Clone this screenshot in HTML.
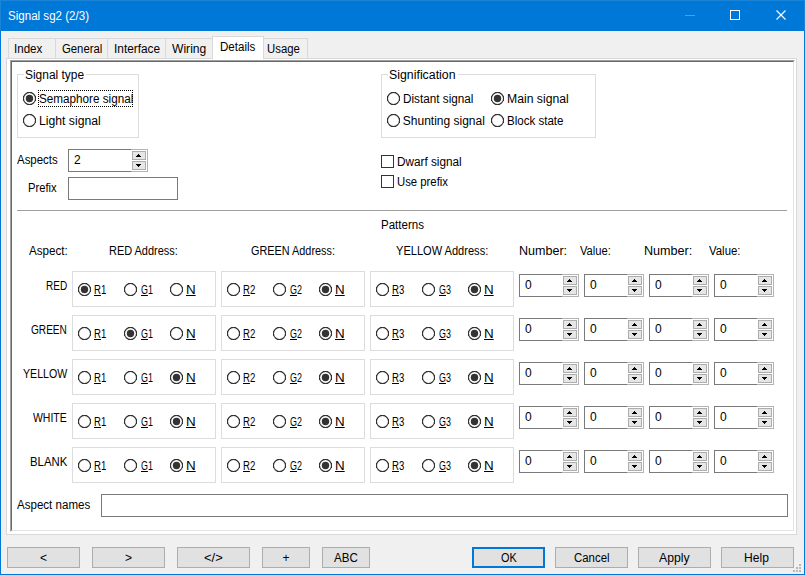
<!DOCTYPE html>
<html><head><meta charset="utf-8"><style>
html,body{margin:0;padding:0}
body{width:805px;height:575px;overflow:hidden;position:relative;background:#F0F0F0;font-family:"Liberation Sans", sans-serif;font-size:12px;line-height:14px;white-space:pre}
div{white-space:pre}
</style></head><body>
<div style="position:absolute;left:0px;top:0px;width:805px;height:31px;background:#0078D7"></div>
<div style="position:absolute;left:0px;top:0px;width:805px;height:1px;background:#1A84D8"></div>
<div style="position:absolute;left:0px;top:0px;width:1px;height:31px;background:#1A84D8"></div>
<div style="position:absolute;left:804px;top:0px;width:1px;height:31px;background:#1A84D8"></div>
<div style="position:absolute;left:0px;top:31px;width:1px;height:544px;background:#0078D7"></div>
<div style="position:absolute;left:804px;top:31px;width:1px;height:544px;background:#0078D7"></div>
<div style="position:absolute;left:0px;top:574px;width:805px;height:1px;background:#0078D7"></div>
<div style="position:absolute;left:1px;top:31px;width:803px;height:1px;background:#F0F0F0"></div>
<div style="position:absolute;left:1px;top:31px;width:1px;height:543px;background:#F0F0F0"></div>
<div style="position:absolute;left:803px;top:31px;width:1px;height:543px;background:#F0F0F0"></div>
<div style="position:absolute;left:1px;top:573px;width:803px;height:1px;background:#F0F0F0"></div>
<div style="position:absolute;left:685px;top:15px;width:10px;height:1px;background:#4D9FE3"></div>
<div style="position:absolute;left:730px;top:10px;width:10px;height:10px;box-sizing:border-box;border:1px solid #fff"></div>
<svg style="position:absolute;left:775px;top:9px" width="12" height="12" viewBox="0 0 12 12"><path d="M1.5 1.5 L10.5 10.5 M10.5 1.5 L1.5 10.5" stroke="#fff" stroke-width="1.1" fill="none"/></svg>
<div style="position:absolute;left:6px;top:58px;width:791px;height:477px;box-sizing:border-box;border:1px solid #D9D9D9;background:#fff"></div>
<div style="position:absolute;left:8px;top:38px;width:48px;height:21px;box-sizing:border-box;border:1px solid #D9D9D9;background:#F0F0F0"></div>
<div style="position:absolute;left:55px;top:38px;width:53px;height:21px;box-sizing:border-box;border:1px solid #D9D9D9;background:#F0F0F0"></div>
<div style="position:absolute;left:107px;top:38px;width:59px;height:21px;box-sizing:border-box;border:1px solid #D9D9D9;background:#F0F0F0"></div>
<div style="position:absolute;left:165px;top:38px;width:48px;height:21px;box-sizing:border-box;border:1px solid #D9D9D9;background:#F0F0F0"></div>
<div style="position:absolute;left:263px;top:38px;width:45px;height:21px;box-sizing:border-box;border:1px solid #D9D9D9;background:#F0F0F0"></div>
<div style="position:absolute;left:212px;top:36px;width:52px;height:23px;box-sizing:border-box;border:1px solid #D9D9D9;border-bottom:none;background:#fff"></div>
<div style="position:absolute;left:10px;top:60px;width:785px;height:472px;box-sizing:border-box;border:1px solid;border-color:#A0A0A0 #FFFFFF #FFFFFF #A0A0A0;background:#fff"></div>
<div style="position:absolute;left:11px;top:61px;width:783px;height:470px;box-sizing:border-box;border:1px solid;border-color:#696969 #E3E3E3 #E3E3E3 #696969;background:#fff"></div>
<div style="position:absolute;left:17px;top:74px;width:122px;height:64px;box-sizing:border-box;border:1px solid #DCDCDC"></div>
<div style="position:absolute;left:24px;top:68px;width:62px;height:12px;background:#fff"></div>
<svg style="position:absolute;left:23px;top:92px" width="13" height="13"><circle cx="6.5" cy="6.5" r="6" fill="#fff" stroke="#333" stroke-width="1.1"/><path d="M4 0h5v1h-5zM0 4h1v1h-1zM0 5h1v1h-1zM0 6h1v1h-1zM0 7h1v1h-1zM0 8h1v1h-1zM12 4h1v1h-1zM12 5h1v1h-1zM12 6h1v1h-1zM12 7h1v1h-1zM12 8h1v1h-1zM4 12h5v1h-5z" fill="#333" shape-rendering="crispEdges"/><circle cx="6.5" cy="6.5" r="3.7" fill="#333" opacity="1"/><path d="M5 3h3v1h-3zM3 5h7v1h-7zM3 6h7v1h-7zM3 7h7v1h-7zM5 9h3v1h-3zM4 4h5v1h-5zM4 8h5v1h-5z" fill="#333"/></svg>
<svg style="position:absolute;left:23px;top:114px" width="13" height="13"><circle cx="6.5" cy="6.5" r="6" fill="#fff" stroke="#333" stroke-width="1.1"/><path d="M4 0h5v1h-5zM0 4h1v1h-1zM0 5h1v1h-1zM0 6h1v1h-1zM0 7h1v1h-1zM0 8h1v1h-1zM12 4h1v1h-1zM12 5h1v1h-1zM12 6h1v1h-1zM12 7h1v1h-1zM12 8h1v1h-1zM4 12h5v1h-5z" fill="#333" shape-rendering="crispEdges"/><circle cx="6.5" cy="6.5" r="3.7" fill="#333" opacity="0"/></svg>
<div style="position:absolute;left:38px;top:90px;width:95px;height:1px;background:repeating-linear-gradient(to right,#000 0 1px,transparent 1px 2px)"></div>
<div style="position:absolute;left:38px;top:106px;width:95px;height:1px;background:repeating-linear-gradient(to right,#000 0 1px,transparent 1px 2px)"></div>
<div style="position:absolute;left:38px;top:90px;width:1px;height:17px;background:repeating-linear-gradient(to bottom,#000 0 1px,transparent 1px 2px)"></div>
<div style="position:absolute;left:132px;top:90px;width:1px;height:17px;background:repeating-linear-gradient(to bottom,#000 0 1px,transparent 1px 2px)"></div>
<div style="position:absolute;left:381px;top:74px;width:215px;height:64px;box-sizing:border-box;border:1px solid #DCDCDC"></div>
<div style="position:absolute;left:388px;top:68px;width:70px;height:12px;background:#fff"></div>
<svg style="position:absolute;left:387px;top:92px" width="13" height="13"><circle cx="6.5" cy="6.5" r="6" fill="#fff" stroke="#333" stroke-width="1.1"/><path d="M4 0h5v1h-5zM0 4h1v1h-1zM0 5h1v1h-1zM0 6h1v1h-1zM0 7h1v1h-1zM0 8h1v1h-1zM12 4h1v1h-1zM12 5h1v1h-1zM12 6h1v1h-1zM12 7h1v1h-1zM12 8h1v1h-1zM4 12h5v1h-5z" fill="#333" shape-rendering="crispEdges"/><circle cx="6.5" cy="6.5" r="3.7" fill="#333" opacity="0"/></svg>
<svg style="position:absolute;left:387px;top:114px" width="13" height="13"><circle cx="6.5" cy="6.5" r="6" fill="#fff" stroke="#333" stroke-width="1.1"/><path d="M4 0h5v1h-5zM0 4h1v1h-1zM0 5h1v1h-1zM0 6h1v1h-1zM0 7h1v1h-1zM0 8h1v1h-1zM12 4h1v1h-1zM12 5h1v1h-1zM12 6h1v1h-1zM12 7h1v1h-1zM12 8h1v1h-1zM4 12h5v1h-5z" fill="#333" shape-rendering="crispEdges"/><circle cx="6.5" cy="6.5" r="3.7" fill="#333" opacity="0"/></svg>
<svg style="position:absolute;left:491px;top:92px" width="13" height="13"><circle cx="6.5" cy="6.5" r="6" fill="#fff" stroke="#333" stroke-width="1.1"/><path d="M4 0h5v1h-5zM0 4h1v1h-1zM0 5h1v1h-1zM0 6h1v1h-1zM0 7h1v1h-1zM0 8h1v1h-1zM12 4h1v1h-1zM12 5h1v1h-1zM12 6h1v1h-1zM12 7h1v1h-1zM12 8h1v1h-1zM4 12h5v1h-5z" fill="#333" shape-rendering="crispEdges"/><circle cx="6.5" cy="6.5" r="3.7" fill="#333" opacity="1"/><path d="M5 3h3v1h-3zM3 5h7v1h-7zM3 6h7v1h-7zM3 7h7v1h-7zM5 9h3v1h-3zM4 4h5v1h-5zM4 8h5v1h-5z" fill="#333"/></svg>
<svg style="position:absolute;left:491px;top:114px" width="13" height="13"><circle cx="6.5" cy="6.5" r="6" fill="#fff" stroke="#333" stroke-width="1.1"/><path d="M4 0h5v1h-5zM0 4h1v1h-1zM0 5h1v1h-1zM0 6h1v1h-1zM0 7h1v1h-1zM0 8h1v1h-1zM12 4h1v1h-1zM12 5h1v1h-1zM12 6h1v1h-1zM12 7h1v1h-1zM12 8h1v1h-1zM4 12h5v1h-5z" fill="#333" shape-rendering="crispEdges"/><circle cx="6.5" cy="6.5" r="3.7" fill="#333" opacity="0"/></svg>
<div style="position:absolute;left:68px;top:149px;width:80px;height:23px;box-sizing:border-box;border:1px solid #7A7A7A;background:#fff"></div>
<div style="position:absolute;left:131px;top:149px;width:17px;height:23px;box-sizing:border-box;border:1px solid #B4B4B4;border-left:none;background:#fff"></div>
<div style="position:absolute;left:132px;top:151px;width:14px;height:9px;box-sizing:border-box;border:1px solid #ADADAD;background:#E6E6E6"></div>
<div style="position:absolute;left:132px;top:161px;width:14px;height:9px;box-sizing:border-box;border:1px solid #ADADAD;background:#E6E6E6"></div>
<svg style="position:absolute;left:132px;top:151px" width="14" height="19" shape-rendering="crispEdges"><rect x="6" y="3" width="1" height="1"/><rect x="5" y="4" width="3" height="1"/><rect x="4" y="5" width="5" height="1"/><rect x="4" y="13" width="5" height="1"/><rect x="5" y="14" width="3" height="1"/><rect x="6" y="15" width="1" height="1"/></svg>
<div style="position:absolute;left:68px;top:177px;width:110px;height:23px;box-sizing:border-box;border:1px solid #7A7A7A;background:#fff"></div>
<div style="position:absolute;left:381px;top:155px;width:13px;height:13px;box-sizing:border-box;border:1px solid #333;background:#fff"></div>
<div style="position:absolute;left:381px;top:175px;width:13px;height:13px;box-sizing:border-box;border:1px solid #333;background:#fff"></div>
<div style="position:absolute;left:17px;top:210px;width:770px;height:1px;background:#A0A0A0"></div>
<div style="position:absolute;left:72px;top:271px;width:144px;height:36px;box-sizing:border-box;border:1px solid #DCDCDC"></div>
<svg style="position:absolute;left:78px;top:283px" width="13" height="13"><circle cx="6.5" cy="6.5" r="6" fill="#fff" stroke="#333" stroke-width="1.1"/><path d="M4 0h5v1h-5zM0 4h1v1h-1zM0 5h1v1h-1zM0 6h1v1h-1zM0 7h1v1h-1zM0 8h1v1h-1zM12 4h1v1h-1zM12 5h1v1h-1zM12 6h1v1h-1zM12 7h1v1h-1zM12 8h1v1h-1zM4 12h5v1h-5z" fill="#333" shape-rendering="crispEdges"/><circle cx="6.5" cy="6.5" r="3.7" fill="#333" opacity="1"/><path d="M5 3h3v1h-3zM3 5h7v1h-7zM3 6h7v1h-7zM3 7h7v1h-7zM5 9h3v1h-3zM4 4h5v1h-5zM4 8h5v1h-5z" fill="#333"/></svg>
<svg style="position:absolute;left:124px;top:283px" width="13" height="13"><circle cx="6.5" cy="6.5" r="6" fill="#fff" stroke="#333" stroke-width="1.1"/><path d="M4 0h5v1h-5zM0 4h1v1h-1zM0 5h1v1h-1zM0 6h1v1h-1zM0 7h1v1h-1zM0 8h1v1h-1zM12 4h1v1h-1zM12 5h1v1h-1zM12 6h1v1h-1zM12 7h1v1h-1zM12 8h1v1h-1zM4 12h5v1h-5z" fill="#333" shape-rendering="crispEdges"/><circle cx="6.5" cy="6.5" r="3.7" fill="#333" opacity="0"/></svg>
<svg style="position:absolute;left:170px;top:283px" width="13" height="13"><circle cx="6.5" cy="6.5" r="6" fill="#fff" stroke="#333" stroke-width="1.1"/><path d="M4 0h5v1h-5zM0 4h1v1h-1zM0 5h1v1h-1zM0 6h1v1h-1zM0 7h1v1h-1zM0 8h1v1h-1zM12 4h1v1h-1zM12 5h1v1h-1zM12 6h1v1h-1zM12 7h1v1h-1zM12 8h1v1h-1zM4 12h5v1h-5z" fill="#333" shape-rendering="crispEdges"/><circle cx="6.5" cy="6.5" r="3.7" fill="#333" opacity="0"/></svg>
<div style="position:absolute;left:221px;top:271px;width:144px;height:36px;box-sizing:border-box;border:1px solid #DCDCDC"></div>
<svg style="position:absolute;left:227px;top:283px" width="13" height="13"><circle cx="6.5" cy="6.5" r="6" fill="#fff" stroke="#333" stroke-width="1.1"/><path d="M4 0h5v1h-5zM0 4h1v1h-1zM0 5h1v1h-1zM0 6h1v1h-1zM0 7h1v1h-1zM0 8h1v1h-1zM12 4h1v1h-1zM12 5h1v1h-1zM12 6h1v1h-1zM12 7h1v1h-1zM12 8h1v1h-1zM4 12h5v1h-5z" fill="#333" shape-rendering="crispEdges"/><circle cx="6.5" cy="6.5" r="3.7" fill="#333" opacity="0"/></svg>
<svg style="position:absolute;left:273px;top:283px" width="13" height="13"><circle cx="6.5" cy="6.5" r="6" fill="#fff" stroke="#333" stroke-width="1.1"/><path d="M4 0h5v1h-5zM0 4h1v1h-1zM0 5h1v1h-1zM0 6h1v1h-1zM0 7h1v1h-1zM0 8h1v1h-1zM12 4h1v1h-1zM12 5h1v1h-1zM12 6h1v1h-1zM12 7h1v1h-1zM12 8h1v1h-1zM4 12h5v1h-5z" fill="#333" shape-rendering="crispEdges"/><circle cx="6.5" cy="6.5" r="3.7" fill="#333" opacity="0"/></svg>
<svg style="position:absolute;left:319px;top:283px" width="13" height="13"><circle cx="6.5" cy="6.5" r="6" fill="#fff" stroke="#333" stroke-width="1.1"/><path d="M4 0h5v1h-5zM0 4h1v1h-1zM0 5h1v1h-1zM0 6h1v1h-1zM0 7h1v1h-1zM0 8h1v1h-1zM12 4h1v1h-1zM12 5h1v1h-1zM12 6h1v1h-1zM12 7h1v1h-1zM12 8h1v1h-1zM4 12h5v1h-5z" fill="#333" shape-rendering="crispEdges"/><circle cx="6.5" cy="6.5" r="3.7" fill="#333" opacity="1"/><path d="M5 3h3v1h-3zM3 5h7v1h-7zM3 6h7v1h-7zM3 7h7v1h-7zM5 9h3v1h-3zM4 4h5v1h-5zM4 8h5v1h-5z" fill="#333"/></svg>
<div style="position:absolute;left:370px;top:271px;width:144px;height:36px;box-sizing:border-box;border:1px solid #DCDCDC"></div>
<svg style="position:absolute;left:376px;top:283px" width="13" height="13"><circle cx="6.5" cy="6.5" r="6" fill="#fff" stroke="#333" stroke-width="1.1"/><path d="M4 0h5v1h-5zM0 4h1v1h-1zM0 5h1v1h-1zM0 6h1v1h-1zM0 7h1v1h-1zM0 8h1v1h-1zM12 4h1v1h-1zM12 5h1v1h-1zM12 6h1v1h-1zM12 7h1v1h-1zM12 8h1v1h-1zM4 12h5v1h-5z" fill="#333" shape-rendering="crispEdges"/><circle cx="6.5" cy="6.5" r="3.7" fill="#333" opacity="0"/></svg>
<svg style="position:absolute;left:422px;top:283px" width="13" height="13"><circle cx="6.5" cy="6.5" r="6" fill="#fff" stroke="#333" stroke-width="1.1"/><path d="M4 0h5v1h-5zM0 4h1v1h-1zM0 5h1v1h-1zM0 6h1v1h-1zM0 7h1v1h-1zM0 8h1v1h-1zM12 4h1v1h-1zM12 5h1v1h-1zM12 6h1v1h-1zM12 7h1v1h-1zM12 8h1v1h-1zM4 12h5v1h-5z" fill="#333" shape-rendering="crispEdges"/><circle cx="6.5" cy="6.5" r="3.7" fill="#333" opacity="0"/></svg>
<svg style="position:absolute;left:468px;top:283px" width="13" height="13"><circle cx="6.5" cy="6.5" r="6" fill="#fff" stroke="#333" stroke-width="1.1"/><path d="M4 0h5v1h-5zM0 4h1v1h-1zM0 5h1v1h-1zM0 6h1v1h-1zM0 7h1v1h-1zM0 8h1v1h-1zM12 4h1v1h-1zM12 5h1v1h-1zM12 6h1v1h-1zM12 7h1v1h-1zM12 8h1v1h-1zM4 12h5v1h-5z" fill="#333" shape-rendering="crispEdges"/><circle cx="6.5" cy="6.5" r="3.7" fill="#333" opacity="1"/><path d="M5 3h3v1h-3zM3 5h7v1h-7zM3 6h7v1h-7zM3 7h7v1h-7zM5 9h3v1h-3zM4 4h5v1h-5zM4 8h5v1h-5z" fill="#333"/></svg>
<div style="position:absolute;left:519px;top:274px;width:60px;height:23px;box-sizing:border-box;border:1px solid #7A7A7A;background:#fff"></div>
<div style="position:absolute;left:562px;top:274px;width:17px;height:23px;box-sizing:border-box;border:1px solid #B4B4B4;border-left:none;background:#fff"></div>
<div style="position:absolute;left:563px;top:276px;width:14px;height:9px;box-sizing:border-box;border:1px solid #ADADAD;background:#E6E6E6"></div>
<div style="position:absolute;left:563px;top:286px;width:14px;height:9px;box-sizing:border-box;border:1px solid #ADADAD;background:#E6E6E6"></div>
<svg style="position:absolute;left:563px;top:276px" width="14" height="19" shape-rendering="crispEdges"><rect x="6" y="3" width="1" height="1"/><rect x="5" y="4" width="3" height="1"/><rect x="4" y="5" width="5" height="1"/><rect x="4" y="13" width="5" height="1"/><rect x="5" y="14" width="3" height="1"/><rect x="6" y="15" width="1" height="1"/></svg>
<div style="position:absolute;left:584px;top:274px;width:60px;height:23px;box-sizing:border-box;border:1px solid #7A7A7A;background:#fff"></div>
<div style="position:absolute;left:627px;top:274px;width:17px;height:23px;box-sizing:border-box;border:1px solid #B4B4B4;border-left:none;background:#fff"></div>
<div style="position:absolute;left:628px;top:276px;width:14px;height:9px;box-sizing:border-box;border:1px solid #ADADAD;background:#E6E6E6"></div>
<div style="position:absolute;left:628px;top:286px;width:14px;height:9px;box-sizing:border-box;border:1px solid #ADADAD;background:#E6E6E6"></div>
<svg style="position:absolute;left:628px;top:276px" width="14" height="19" shape-rendering="crispEdges"><rect x="6" y="3" width="1" height="1"/><rect x="5" y="4" width="3" height="1"/><rect x="4" y="5" width="5" height="1"/><rect x="4" y="13" width="5" height="1"/><rect x="5" y="14" width="3" height="1"/><rect x="6" y="15" width="1" height="1"/></svg>
<div style="position:absolute;left:649px;top:274px;width:60px;height:23px;box-sizing:border-box;border:1px solid #7A7A7A;background:#fff"></div>
<div style="position:absolute;left:692px;top:274px;width:17px;height:23px;box-sizing:border-box;border:1px solid #B4B4B4;border-left:none;background:#fff"></div>
<div style="position:absolute;left:693px;top:276px;width:14px;height:9px;box-sizing:border-box;border:1px solid #ADADAD;background:#E6E6E6"></div>
<div style="position:absolute;left:693px;top:286px;width:14px;height:9px;box-sizing:border-box;border:1px solid #ADADAD;background:#E6E6E6"></div>
<svg style="position:absolute;left:693px;top:276px" width="14" height="19" shape-rendering="crispEdges"><rect x="6" y="3" width="1" height="1"/><rect x="5" y="4" width="3" height="1"/><rect x="4" y="5" width="5" height="1"/><rect x="4" y="13" width="5" height="1"/><rect x="5" y="14" width="3" height="1"/><rect x="6" y="15" width="1" height="1"/></svg>
<div style="position:absolute;left:714px;top:274px;width:60px;height:23px;box-sizing:border-box;border:1px solid #7A7A7A;background:#fff"></div>
<div style="position:absolute;left:757px;top:274px;width:17px;height:23px;box-sizing:border-box;border:1px solid #B4B4B4;border-left:none;background:#fff"></div>
<div style="position:absolute;left:758px;top:276px;width:14px;height:9px;box-sizing:border-box;border:1px solid #ADADAD;background:#E6E6E6"></div>
<div style="position:absolute;left:758px;top:286px;width:14px;height:9px;box-sizing:border-box;border:1px solid #ADADAD;background:#E6E6E6"></div>
<svg style="position:absolute;left:758px;top:276px" width="14" height="19" shape-rendering="crispEdges"><rect x="6" y="3" width="1" height="1"/><rect x="5" y="4" width="3" height="1"/><rect x="4" y="5" width="5" height="1"/><rect x="4" y="13" width="5" height="1"/><rect x="5" y="14" width="3" height="1"/><rect x="6" y="15" width="1" height="1"/></svg>
<div style="position:absolute;left:72px;top:315px;width:144px;height:36px;box-sizing:border-box;border:1px solid #DCDCDC"></div>
<svg style="position:absolute;left:78px;top:327px" width="13" height="13"><circle cx="6.5" cy="6.5" r="6" fill="#fff" stroke="#333" stroke-width="1.1"/><path d="M4 0h5v1h-5zM0 4h1v1h-1zM0 5h1v1h-1zM0 6h1v1h-1zM0 7h1v1h-1zM0 8h1v1h-1zM12 4h1v1h-1zM12 5h1v1h-1zM12 6h1v1h-1zM12 7h1v1h-1zM12 8h1v1h-1zM4 12h5v1h-5z" fill="#333" shape-rendering="crispEdges"/><circle cx="6.5" cy="6.5" r="3.7" fill="#333" opacity="0"/></svg>
<svg style="position:absolute;left:124px;top:327px" width="13" height="13"><circle cx="6.5" cy="6.5" r="6" fill="#fff" stroke="#333" stroke-width="1.1"/><path d="M4 0h5v1h-5zM0 4h1v1h-1zM0 5h1v1h-1zM0 6h1v1h-1zM0 7h1v1h-1zM0 8h1v1h-1zM12 4h1v1h-1zM12 5h1v1h-1zM12 6h1v1h-1zM12 7h1v1h-1zM12 8h1v1h-1zM4 12h5v1h-5z" fill="#333" shape-rendering="crispEdges"/><circle cx="6.5" cy="6.5" r="3.7" fill="#333" opacity="1"/><path d="M5 3h3v1h-3zM3 5h7v1h-7zM3 6h7v1h-7zM3 7h7v1h-7zM5 9h3v1h-3zM4 4h5v1h-5zM4 8h5v1h-5z" fill="#333"/></svg>
<svg style="position:absolute;left:170px;top:327px" width="13" height="13"><circle cx="6.5" cy="6.5" r="6" fill="#fff" stroke="#333" stroke-width="1.1"/><path d="M4 0h5v1h-5zM0 4h1v1h-1zM0 5h1v1h-1zM0 6h1v1h-1zM0 7h1v1h-1zM0 8h1v1h-1zM12 4h1v1h-1zM12 5h1v1h-1zM12 6h1v1h-1zM12 7h1v1h-1zM12 8h1v1h-1zM4 12h5v1h-5z" fill="#333" shape-rendering="crispEdges"/><circle cx="6.5" cy="6.5" r="3.7" fill="#333" opacity="0"/></svg>
<div style="position:absolute;left:221px;top:315px;width:144px;height:36px;box-sizing:border-box;border:1px solid #DCDCDC"></div>
<svg style="position:absolute;left:227px;top:327px" width="13" height="13"><circle cx="6.5" cy="6.5" r="6" fill="#fff" stroke="#333" stroke-width="1.1"/><path d="M4 0h5v1h-5zM0 4h1v1h-1zM0 5h1v1h-1zM0 6h1v1h-1zM0 7h1v1h-1zM0 8h1v1h-1zM12 4h1v1h-1zM12 5h1v1h-1zM12 6h1v1h-1zM12 7h1v1h-1zM12 8h1v1h-1zM4 12h5v1h-5z" fill="#333" shape-rendering="crispEdges"/><circle cx="6.5" cy="6.5" r="3.7" fill="#333" opacity="0"/></svg>
<svg style="position:absolute;left:273px;top:327px" width="13" height="13"><circle cx="6.5" cy="6.5" r="6" fill="#fff" stroke="#333" stroke-width="1.1"/><path d="M4 0h5v1h-5zM0 4h1v1h-1zM0 5h1v1h-1zM0 6h1v1h-1zM0 7h1v1h-1zM0 8h1v1h-1zM12 4h1v1h-1zM12 5h1v1h-1zM12 6h1v1h-1zM12 7h1v1h-1zM12 8h1v1h-1zM4 12h5v1h-5z" fill="#333" shape-rendering="crispEdges"/><circle cx="6.5" cy="6.5" r="3.7" fill="#333" opacity="0"/></svg>
<svg style="position:absolute;left:319px;top:327px" width="13" height="13"><circle cx="6.5" cy="6.5" r="6" fill="#fff" stroke="#333" stroke-width="1.1"/><path d="M4 0h5v1h-5zM0 4h1v1h-1zM0 5h1v1h-1zM0 6h1v1h-1zM0 7h1v1h-1zM0 8h1v1h-1zM12 4h1v1h-1zM12 5h1v1h-1zM12 6h1v1h-1zM12 7h1v1h-1zM12 8h1v1h-1zM4 12h5v1h-5z" fill="#333" shape-rendering="crispEdges"/><circle cx="6.5" cy="6.5" r="3.7" fill="#333" opacity="1"/><path d="M5 3h3v1h-3zM3 5h7v1h-7zM3 6h7v1h-7zM3 7h7v1h-7zM5 9h3v1h-3zM4 4h5v1h-5zM4 8h5v1h-5z" fill="#333"/></svg>
<div style="position:absolute;left:370px;top:315px;width:144px;height:36px;box-sizing:border-box;border:1px solid #DCDCDC"></div>
<svg style="position:absolute;left:376px;top:327px" width="13" height="13"><circle cx="6.5" cy="6.5" r="6" fill="#fff" stroke="#333" stroke-width="1.1"/><path d="M4 0h5v1h-5zM0 4h1v1h-1zM0 5h1v1h-1zM0 6h1v1h-1zM0 7h1v1h-1zM0 8h1v1h-1zM12 4h1v1h-1zM12 5h1v1h-1zM12 6h1v1h-1zM12 7h1v1h-1zM12 8h1v1h-1zM4 12h5v1h-5z" fill="#333" shape-rendering="crispEdges"/><circle cx="6.5" cy="6.5" r="3.7" fill="#333" opacity="0"/></svg>
<svg style="position:absolute;left:422px;top:327px" width="13" height="13"><circle cx="6.5" cy="6.5" r="6" fill="#fff" stroke="#333" stroke-width="1.1"/><path d="M4 0h5v1h-5zM0 4h1v1h-1zM0 5h1v1h-1zM0 6h1v1h-1zM0 7h1v1h-1zM0 8h1v1h-1zM12 4h1v1h-1zM12 5h1v1h-1zM12 6h1v1h-1zM12 7h1v1h-1zM12 8h1v1h-1zM4 12h5v1h-5z" fill="#333" shape-rendering="crispEdges"/><circle cx="6.5" cy="6.5" r="3.7" fill="#333" opacity="0"/></svg>
<svg style="position:absolute;left:468px;top:327px" width="13" height="13"><circle cx="6.5" cy="6.5" r="6" fill="#fff" stroke="#333" stroke-width="1.1"/><path d="M4 0h5v1h-5zM0 4h1v1h-1zM0 5h1v1h-1zM0 6h1v1h-1zM0 7h1v1h-1zM0 8h1v1h-1zM12 4h1v1h-1zM12 5h1v1h-1zM12 6h1v1h-1zM12 7h1v1h-1zM12 8h1v1h-1zM4 12h5v1h-5z" fill="#333" shape-rendering="crispEdges"/><circle cx="6.5" cy="6.5" r="3.7" fill="#333" opacity="1"/><path d="M5 3h3v1h-3zM3 5h7v1h-7zM3 6h7v1h-7zM3 7h7v1h-7zM5 9h3v1h-3zM4 4h5v1h-5zM4 8h5v1h-5z" fill="#333"/></svg>
<div style="position:absolute;left:519px;top:318px;width:60px;height:23px;box-sizing:border-box;border:1px solid #7A7A7A;background:#fff"></div>
<div style="position:absolute;left:562px;top:318px;width:17px;height:23px;box-sizing:border-box;border:1px solid #B4B4B4;border-left:none;background:#fff"></div>
<div style="position:absolute;left:563px;top:320px;width:14px;height:9px;box-sizing:border-box;border:1px solid #ADADAD;background:#E6E6E6"></div>
<div style="position:absolute;left:563px;top:330px;width:14px;height:9px;box-sizing:border-box;border:1px solid #ADADAD;background:#E6E6E6"></div>
<svg style="position:absolute;left:563px;top:320px" width="14" height="19" shape-rendering="crispEdges"><rect x="6" y="3" width="1" height="1"/><rect x="5" y="4" width="3" height="1"/><rect x="4" y="5" width="5" height="1"/><rect x="4" y="13" width="5" height="1"/><rect x="5" y="14" width="3" height="1"/><rect x="6" y="15" width="1" height="1"/></svg>
<div style="position:absolute;left:584px;top:318px;width:60px;height:23px;box-sizing:border-box;border:1px solid #7A7A7A;background:#fff"></div>
<div style="position:absolute;left:627px;top:318px;width:17px;height:23px;box-sizing:border-box;border:1px solid #B4B4B4;border-left:none;background:#fff"></div>
<div style="position:absolute;left:628px;top:320px;width:14px;height:9px;box-sizing:border-box;border:1px solid #ADADAD;background:#E6E6E6"></div>
<div style="position:absolute;left:628px;top:330px;width:14px;height:9px;box-sizing:border-box;border:1px solid #ADADAD;background:#E6E6E6"></div>
<svg style="position:absolute;left:628px;top:320px" width="14" height="19" shape-rendering="crispEdges"><rect x="6" y="3" width="1" height="1"/><rect x="5" y="4" width="3" height="1"/><rect x="4" y="5" width="5" height="1"/><rect x="4" y="13" width="5" height="1"/><rect x="5" y="14" width="3" height="1"/><rect x="6" y="15" width="1" height="1"/></svg>
<div style="position:absolute;left:649px;top:318px;width:60px;height:23px;box-sizing:border-box;border:1px solid #7A7A7A;background:#fff"></div>
<div style="position:absolute;left:692px;top:318px;width:17px;height:23px;box-sizing:border-box;border:1px solid #B4B4B4;border-left:none;background:#fff"></div>
<div style="position:absolute;left:693px;top:320px;width:14px;height:9px;box-sizing:border-box;border:1px solid #ADADAD;background:#E6E6E6"></div>
<div style="position:absolute;left:693px;top:330px;width:14px;height:9px;box-sizing:border-box;border:1px solid #ADADAD;background:#E6E6E6"></div>
<svg style="position:absolute;left:693px;top:320px" width="14" height="19" shape-rendering="crispEdges"><rect x="6" y="3" width="1" height="1"/><rect x="5" y="4" width="3" height="1"/><rect x="4" y="5" width="5" height="1"/><rect x="4" y="13" width="5" height="1"/><rect x="5" y="14" width="3" height="1"/><rect x="6" y="15" width="1" height="1"/></svg>
<div style="position:absolute;left:714px;top:318px;width:60px;height:23px;box-sizing:border-box;border:1px solid #7A7A7A;background:#fff"></div>
<div style="position:absolute;left:757px;top:318px;width:17px;height:23px;box-sizing:border-box;border:1px solid #B4B4B4;border-left:none;background:#fff"></div>
<div style="position:absolute;left:758px;top:320px;width:14px;height:9px;box-sizing:border-box;border:1px solid #ADADAD;background:#E6E6E6"></div>
<div style="position:absolute;left:758px;top:330px;width:14px;height:9px;box-sizing:border-box;border:1px solid #ADADAD;background:#E6E6E6"></div>
<svg style="position:absolute;left:758px;top:320px" width="14" height="19" shape-rendering="crispEdges"><rect x="6" y="3" width="1" height="1"/><rect x="5" y="4" width="3" height="1"/><rect x="4" y="5" width="5" height="1"/><rect x="4" y="13" width="5" height="1"/><rect x="5" y="14" width="3" height="1"/><rect x="6" y="15" width="1" height="1"/></svg>
<div style="position:absolute;left:72px;top:359px;width:144px;height:36px;box-sizing:border-box;border:1px solid #DCDCDC"></div>
<svg style="position:absolute;left:78px;top:371px" width="13" height="13"><circle cx="6.5" cy="6.5" r="6" fill="#fff" stroke="#333" stroke-width="1.1"/><path d="M4 0h5v1h-5zM0 4h1v1h-1zM0 5h1v1h-1zM0 6h1v1h-1zM0 7h1v1h-1zM0 8h1v1h-1zM12 4h1v1h-1zM12 5h1v1h-1zM12 6h1v1h-1zM12 7h1v1h-1zM12 8h1v1h-1zM4 12h5v1h-5z" fill="#333" shape-rendering="crispEdges"/><circle cx="6.5" cy="6.5" r="3.7" fill="#333" opacity="0"/></svg>
<svg style="position:absolute;left:124px;top:371px" width="13" height="13"><circle cx="6.5" cy="6.5" r="6" fill="#fff" stroke="#333" stroke-width="1.1"/><path d="M4 0h5v1h-5zM0 4h1v1h-1zM0 5h1v1h-1zM0 6h1v1h-1zM0 7h1v1h-1zM0 8h1v1h-1zM12 4h1v1h-1zM12 5h1v1h-1zM12 6h1v1h-1zM12 7h1v1h-1zM12 8h1v1h-1zM4 12h5v1h-5z" fill="#333" shape-rendering="crispEdges"/><circle cx="6.5" cy="6.5" r="3.7" fill="#333" opacity="0"/></svg>
<svg style="position:absolute;left:170px;top:371px" width="13" height="13"><circle cx="6.5" cy="6.5" r="6" fill="#fff" stroke="#333" stroke-width="1.1"/><path d="M4 0h5v1h-5zM0 4h1v1h-1zM0 5h1v1h-1zM0 6h1v1h-1zM0 7h1v1h-1zM0 8h1v1h-1zM12 4h1v1h-1zM12 5h1v1h-1zM12 6h1v1h-1zM12 7h1v1h-1zM12 8h1v1h-1zM4 12h5v1h-5z" fill="#333" shape-rendering="crispEdges"/><circle cx="6.5" cy="6.5" r="3.7" fill="#333" opacity="1"/><path d="M5 3h3v1h-3zM3 5h7v1h-7zM3 6h7v1h-7zM3 7h7v1h-7zM5 9h3v1h-3zM4 4h5v1h-5zM4 8h5v1h-5z" fill="#333"/></svg>
<div style="position:absolute;left:221px;top:359px;width:144px;height:36px;box-sizing:border-box;border:1px solid #DCDCDC"></div>
<svg style="position:absolute;left:227px;top:371px" width="13" height="13"><circle cx="6.5" cy="6.5" r="6" fill="#fff" stroke="#333" stroke-width="1.1"/><path d="M4 0h5v1h-5zM0 4h1v1h-1zM0 5h1v1h-1zM0 6h1v1h-1zM0 7h1v1h-1zM0 8h1v1h-1zM12 4h1v1h-1zM12 5h1v1h-1zM12 6h1v1h-1zM12 7h1v1h-1zM12 8h1v1h-1zM4 12h5v1h-5z" fill="#333" shape-rendering="crispEdges"/><circle cx="6.5" cy="6.5" r="3.7" fill="#333" opacity="0"/></svg>
<svg style="position:absolute;left:273px;top:371px" width="13" height="13"><circle cx="6.5" cy="6.5" r="6" fill="#fff" stroke="#333" stroke-width="1.1"/><path d="M4 0h5v1h-5zM0 4h1v1h-1zM0 5h1v1h-1zM0 6h1v1h-1zM0 7h1v1h-1zM0 8h1v1h-1zM12 4h1v1h-1zM12 5h1v1h-1zM12 6h1v1h-1zM12 7h1v1h-1zM12 8h1v1h-1zM4 12h5v1h-5z" fill="#333" shape-rendering="crispEdges"/><circle cx="6.5" cy="6.5" r="3.7" fill="#333" opacity="0"/></svg>
<svg style="position:absolute;left:319px;top:371px" width="13" height="13"><circle cx="6.5" cy="6.5" r="6" fill="#fff" stroke="#333" stroke-width="1.1"/><path d="M4 0h5v1h-5zM0 4h1v1h-1zM0 5h1v1h-1zM0 6h1v1h-1zM0 7h1v1h-1zM0 8h1v1h-1zM12 4h1v1h-1zM12 5h1v1h-1zM12 6h1v1h-1zM12 7h1v1h-1zM12 8h1v1h-1zM4 12h5v1h-5z" fill="#333" shape-rendering="crispEdges"/><circle cx="6.5" cy="6.5" r="3.7" fill="#333" opacity="1"/><path d="M5 3h3v1h-3zM3 5h7v1h-7zM3 6h7v1h-7zM3 7h7v1h-7zM5 9h3v1h-3zM4 4h5v1h-5zM4 8h5v1h-5z" fill="#333"/></svg>
<div style="position:absolute;left:370px;top:359px;width:144px;height:36px;box-sizing:border-box;border:1px solid #DCDCDC"></div>
<svg style="position:absolute;left:376px;top:371px" width="13" height="13"><circle cx="6.5" cy="6.5" r="6" fill="#fff" stroke="#333" stroke-width="1.1"/><path d="M4 0h5v1h-5zM0 4h1v1h-1zM0 5h1v1h-1zM0 6h1v1h-1zM0 7h1v1h-1zM0 8h1v1h-1zM12 4h1v1h-1zM12 5h1v1h-1zM12 6h1v1h-1zM12 7h1v1h-1zM12 8h1v1h-1zM4 12h5v1h-5z" fill="#333" shape-rendering="crispEdges"/><circle cx="6.5" cy="6.5" r="3.7" fill="#333" opacity="0"/></svg>
<svg style="position:absolute;left:422px;top:371px" width="13" height="13"><circle cx="6.5" cy="6.5" r="6" fill="#fff" stroke="#333" stroke-width="1.1"/><path d="M4 0h5v1h-5zM0 4h1v1h-1zM0 5h1v1h-1zM0 6h1v1h-1zM0 7h1v1h-1zM0 8h1v1h-1zM12 4h1v1h-1zM12 5h1v1h-1zM12 6h1v1h-1zM12 7h1v1h-1zM12 8h1v1h-1zM4 12h5v1h-5z" fill="#333" shape-rendering="crispEdges"/><circle cx="6.5" cy="6.5" r="3.7" fill="#333" opacity="0"/></svg>
<svg style="position:absolute;left:468px;top:371px" width="13" height="13"><circle cx="6.5" cy="6.5" r="6" fill="#fff" stroke="#333" stroke-width="1.1"/><path d="M4 0h5v1h-5zM0 4h1v1h-1zM0 5h1v1h-1zM0 6h1v1h-1zM0 7h1v1h-1zM0 8h1v1h-1zM12 4h1v1h-1zM12 5h1v1h-1zM12 6h1v1h-1zM12 7h1v1h-1zM12 8h1v1h-1zM4 12h5v1h-5z" fill="#333" shape-rendering="crispEdges"/><circle cx="6.5" cy="6.5" r="3.7" fill="#333" opacity="1"/><path d="M5 3h3v1h-3zM3 5h7v1h-7zM3 6h7v1h-7zM3 7h7v1h-7zM5 9h3v1h-3zM4 4h5v1h-5zM4 8h5v1h-5z" fill="#333"/></svg>
<div style="position:absolute;left:519px;top:362px;width:60px;height:23px;box-sizing:border-box;border:1px solid #7A7A7A;background:#fff"></div>
<div style="position:absolute;left:562px;top:362px;width:17px;height:23px;box-sizing:border-box;border:1px solid #B4B4B4;border-left:none;background:#fff"></div>
<div style="position:absolute;left:563px;top:364px;width:14px;height:9px;box-sizing:border-box;border:1px solid #ADADAD;background:#E6E6E6"></div>
<div style="position:absolute;left:563px;top:374px;width:14px;height:9px;box-sizing:border-box;border:1px solid #ADADAD;background:#E6E6E6"></div>
<svg style="position:absolute;left:563px;top:364px" width="14" height="19" shape-rendering="crispEdges"><rect x="6" y="3" width="1" height="1"/><rect x="5" y="4" width="3" height="1"/><rect x="4" y="5" width="5" height="1"/><rect x="4" y="13" width="5" height="1"/><rect x="5" y="14" width="3" height="1"/><rect x="6" y="15" width="1" height="1"/></svg>
<div style="position:absolute;left:584px;top:362px;width:60px;height:23px;box-sizing:border-box;border:1px solid #7A7A7A;background:#fff"></div>
<div style="position:absolute;left:627px;top:362px;width:17px;height:23px;box-sizing:border-box;border:1px solid #B4B4B4;border-left:none;background:#fff"></div>
<div style="position:absolute;left:628px;top:364px;width:14px;height:9px;box-sizing:border-box;border:1px solid #ADADAD;background:#E6E6E6"></div>
<div style="position:absolute;left:628px;top:374px;width:14px;height:9px;box-sizing:border-box;border:1px solid #ADADAD;background:#E6E6E6"></div>
<svg style="position:absolute;left:628px;top:364px" width="14" height="19" shape-rendering="crispEdges"><rect x="6" y="3" width="1" height="1"/><rect x="5" y="4" width="3" height="1"/><rect x="4" y="5" width="5" height="1"/><rect x="4" y="13" width="5" height="1"/><rect x="5" y="14" width="3" height="1"/><rect x="6" y="15" width="1" height="1"/></svg>
<div style="position:absolute;left:649px;top:362px;width:60px;height:23px;box-sizing:border-box;border:1px solid #7A7A7A;background:#fff"></div>
<div style="position:absolute;left:692px;top:362px;width:17px;height:23px;box-sizing:border-box;border:1px solid #B4B4B4;border-left:none;background:#fff"></div>
<div style="position:absolute;left:693px;top:364px;width:14px;height:9px;box-sizing:border-box;border:1px solid #ADADAD;background:#E6E6E6"></div>
<div style="position:absolute;left:693px;top:374px;width:14px;height:9px;box-sizing:border-box;border:1px solid #ADADAD;background:#E6E6E6"></div>
<svg style="position:absolute;left:693px;top:364px" width="14" height="19" shape-rendering="crispEdges"><rect x="6" y="3" width="1" height="1"/><rect x="5" y="4" width="3" height="1"/><rect x="4" y="5" width="5" height="1"/><rect x="4" y="13" width="5" height="1"/><rect x="5" y="14" width="3" height="1"/><rect x="6" y="15" width="1" height="1"/></svg>
<div style="position:absolute;left:714px;top:362px;width:60px;height:23px;box-sizing:border-box;border:1px solid #7A7A7A;background:#fff"></div>
<div style="position:absolute;left:757px;top:362px;width:17px;height:23px;box-sizing:border-box;border:1px solid #B4B4B4;border-left:none;background:#fff"></div>
<div style="position:absolute;left:758px;top:364px;width:14px;height:9px;box-sizing:border-box;border:1px solid #ADADAD;background:#E6E6E6"></div>
<div style="position:absolute;left:758px;top:374px;width:14px;height:9px;box-sizing:border-box;border:1px solid #ADADAD;background:#E6E6E6"></div>
<svg style="position:absolute;left:758px;top:364px" width="14" height="19" shape-rendering="crispEdges"><rect x="6" y="3" width="1" height="1"/><rect x="5" y="4" width="3" height="1"/><rect x="4" y="5" width="5" height="1"/><rect x="4" y="13" width="5" height="1"/><rect x="5" y="14" width="3" height="1"/><rect x="6" y="15" width="1" height="1"/></svg>
<div style="position:absolute;left:72px;top:403px;width:144px;height:36px;box-sizing:border-box;border:1px solid #DCDCDC"></div>
<svg style="position:absolute;left:78px;top:415px" width="13" height="13"><circle cx="6.5" cy="6.5" r="6" fill="#fff" stroke="#333" stroke-width="1.1"/><path d="M4 0h5v1h-5zM0 4h1v1h-1zM0 5h1v1h-1zM0 6h1v1h-1zM0 7h1v1h-1zM0 8h1v1h-1zM12 4h1v1h-1zM12 5h1v1h-1zM12 6h1v1h-1zM12 7h1v1h-1zM12 8h1v1h-1zM4 12h5v1h-5z" fill="#333" shape-rendering="crispEdges"/><circle cx="6.5" cy="6.5" r="3.7" fill="#333" opacity="0"/></svg>
<svg style="position:absolute;left:124px;top:415px" width="13" height="13"><circle cx="6.5" cy="6.5" r="6" fill="#fff" stroke="#333" stroke-width="1.1"/><path d="M4 0h5v1h-5zM0 4h1v1h-1zM0 5h1v1h-1zM0 6h1v1h-1zM0 7h1v1h-1zM0 8h1v1h-1zM12 4h1v1h-1zM12 5h1v1h-1zM12 6h1v1h-1zM12 7h1v1h-1zM12 8h1v1h-1zM4 12h5v1h-5z" fill="#333" shape-rendering="crispEdges"/><circle cx="6.5" cy="6.5" r="3.7" fill="#333" opacity="0"/></svg>
<svg style="position:absolute;left:170px;top:415px" width="13" height="13"><circle cx="6.5" cy="6.5" r="6" fill="#fff" stroke="#333" stroke-width="1.1"/><path d="M4 0h5v1h-5zM0 4h1v1h-1zM0 5h1v1h-1zM0 6h1v1h-1zM0 7h1v1h-1zM0 8h1v1h-1zM12 4h1v1h-1zM12 5h1v1h-1zM12 6h1v1h-1zM12 7h1v1h-1zM12 8h1v1h-1zM4 12h5v1h-5z" fill="#333" shape-rendering="crispEdges"/><circle cx="6.5" cy="6.5" r="3.7" fill="#333" opacity="1"/><path d="M5 3h3v1h-3zM3 5h7v1h-7zM3 6h7v1h-7zM3 7h7v1h-7zM5 9h3v1h-3zM4 4h5v1h-5zM4 8h5v1h-5z" fill="#333"/></svg>
<div style="position:absolute;left:221px;top:403px;width:144px;height:36px;box-sizing:border-box;border:1px solid #DCDCDC"></div>
<svg style="position:absolute;left:227px;top:415px" width="13" height="13"><circle cx="6.5" cy="6.5" r="6" fill="#fff" stroke="#333" stroke-width="1.1"/><path d="M4 0h5v1h-5zM0 4h1v1h-1zM0 5h1v1h-1zM0 6h1v1h-1zM0 7h1v1h-1zM0 8h1v1h-1zM12 4h1v1h-1zM12 5h1v1h-1zM12 6h1v1h-1zM12 7h1v1h-1zM12 8h1v1h-1zM4 12h5v1h-5z" fill="#333" shape-rendering="crispEdges"/><circle cx="6.5" cy="6.5" r="3.7" fill="#333" opacity="0"/></svg>
<svg style="position:absolute;left:273px;top:415px" width="13" height="13"><circle cx="6.5" cy="6.5" r="6" fill="#fff" stroke="#333" stroke-width="1.1"/><path d="M4 0h5v1h-5zM0 4h1v1h-1zM0 5h1v1h-1zM0 6h1v1h-1zM0 7h1v1h-1zM0 8h1v1h-1zM12 4h1v1h-1zM12 5h1v1h-1zM12 6h1v1h-1zM12 7h1v1h-1zM12 8h1v1h-1zM4 12h5v1h-5z" fill="#333" shape-rendering="crispEdges"/><circle cx="6.5" cy="6.5" r="3.7" fill="#333" opacity="0"/></svg>
<svg style="position:absolute;left:319px;top:415px" width="13" height="13"><circle cx="6.5" cy="6.5" r="6" fill="#fff" stroke="#333" stroke-width="1.1"/><path d="M4 0h5v1h-5zM0 4h1v1h-1zM0 5h1v1h-1zM0 6h1v1h-1zM0 7h1v1h-1zM0 8h1v1h-1zM12 4h1v1h-1zM12 5h1v1h-1zM12 6h1v1h-1zM12 7h1v1h-1zM12 8h1v1h-1zM4 12h5v1h-5z" fill="#333" shape-rendering="crispEdges"/><circle cx="6.5" cy="6.5" r="3.7" fill="#333" opacity="1"/><path d="M5 3h3v1h-3zM3 5h7v1h-7zM3 6h7v1h-7zM3 7h7v1h-7zM5 9h3v1h-3zM4 4h5v1h-5zM4 8h5v1h-5z" fill="#333"/></svg>
<div style="position:absolute;left:370px;top:403px;width:144px;height:36px;box-sizing:border-box;border:1px solid #DCDCDC"></div>
<svg style="position:absolute;left:376px;top:415px" width="13" height="13"><circle cx="6.5" cy="6.5" r="6" fill="#fff" stroke="#333" stroke-width="1.1"/><path d="M4 0h5v1h-5zM0 4h1v1h-1zM0 5h1v1h-1zM0 6h1v1h-1zM0 7h1v1h-1zM0 8h1v1h-1zM12 4h1v1h-1zM12 5h1v1h-1zM12 6h1v1h-1zM12 7h1v1h-1zM12 8h1v1h-1zM4 12h5v1h-5z" fill="#333" shape-rendering="crispEdges"/><circle cx="6.5" cy="6.5" r="3.7" fill="#333" opacity="0"/></svg>
<svg style="position:absolute;left:422px;top:415px" width="13" height="13"><circle cx="6.5" cy="6.5" r="6" fill="#fff" stroke="#333" stroke-width="1.1"/><path d="M4 0h5v1h-5zM0 4h1v1h-1zM0 5h1v1h-1zM0 6h1v1h-1zM0 7h1v1h-1zM0 8h1v1h-1zM12 4h1v1h-1zM12 5h1v1h-1zM12 6h1v1h-1zM12 7h1v1h-1zM12 8h1v1h-1zM4 12h5v1h-5z" fill="#333" shape-rendering="crispEdges"/><circle cx="6.5" cy="6.5" r="3.7" fill="#333" opacity="0"/></svg>
<svg style="position:absolute;left:468px;top:415px" width="13" height="13"><circle cx="6.5" cy="6.5" r="6" fill="#fff" stroke="#333" stroke-width="1.1"/><path d="M4 0h5v1h-5zM0 4h1v1h-1zM0 5h1v1h-1zM0 6h1v1h-1zM0 7h1v1h-1zM0 8h1v1h-1zM12 4h1v1h-1zM12 5h1v1h-1zM12 6h1v1h-1zM12 7h1v1h-1zM12 8h1v1h-1zM4 12h5v1h-5z" fill="#333" shape-rendering="crispEdges"/><circle cx="6.5" cy="6.5" r="3.7" fill="#333" opacity="1"/><path d="M5 3h3v1h-3zM3 5h7v1h-7zM3 6h7v1h-7zM3 7h7v1h-7zM5 9h3v1h-3zM4 4h5v1h-5zM4 8h5v1h-5z" fill="#333"/></svg>
<div style="position:absolute;left:519px;top:406px;width:60px;height:23px;box-sizing:border-box;border:1px solid #7A7A7A;background:#fff"></div>
<div style="position:absolute;left:562px;top:406px;width:17px;height:23px;box-sizing:border-box;border:1px solid #B4B4B4;border-left:none;background:#fff"></div>
<div style="position:absolute;left:563px;top:408px;width:14px;height:9px;box-sizing:border-box;border:1px solid #ADADAD;background:#E6E6E6"></div>
<div style="position:absolute;left:563px;top:418px;width:14px;height:9px;box-sizing:border-box;border:1px solid #ADADAD;background:#E6E6E6"></div>
<svg style="position:absolute;left:563px;top:408px" width="14" height="19" shape-rendering="crispEdges"><rect x="6" y="3" width="1" height="1"/><rect x="5" y="4" width="3" height="1"/><rect x="4" y="5" width="5" height="1"/><rect x="4" y="13" width="5" height="1"/><rect x="5" y="14" width="3" height="1"/><rect x="6" y="15" width="1" height="1"/></svg>
<div style="position:absolute;left:584px;top:406px;width:60px;height:23px;box-sizing:border-box;border:1px solid #7A7A7A;background:#fff"></div>
<div style="position:absolute;left:627px;top:406px;width:17px;height:23px;box-sizing:border-box;border:1px solid #B4B4B4;border-left:none;background:#fff"></div>
<div style="position:absolute;left:628px;top:408px;width:14px;height:9px;box-sizing:border-box;border:1px solid #ADADAD;background:#E6E6E6"></div>
<div style="position:absolute;left:628px;top:418px;width:14px;height:9px;box-sizing:border-box;border:1px solid #ADADAD;background:#E6E6E6"></div>
<svg style="position:absolute;left:628px;top:408px" width="14" height="19" shape-rendering="crispEdges"><rect x="6" y="3" width="1" height="1"/><rect x="5" y="4" width="3" height="1"/><rect x="4" y="5" width="5" height="1"/><rect x="4" y="13" width="5" height="1"/><rect x="5" y="14" width="3" height="1"/><rect x="6" y="15" width="1" height="1"/></svg>
<div style="position:absolute;left:649px;top:406px;width:60px;height:23px;box-sizing:border-box;border:1px solid #7A7A7A;background:#fff"></div>
<div style="position:absolute;left:692px;top:406px;width:17px;height:23px;box-sizing:border-box;border:1px solid #B4B4B4;border-left:none;background:#fff"></div>
<div style="position:absolute;left:693px;top:408px;width:14px;height:9px;box-sizing:border-box;border:1px solid #ADADAD;background:#E6E6E6"></div>
<div style="position:absolute;left:693px;top:418px;width:14px;height:9px;box-sizing:border-box;border:1px solid #ADADAD;background:#E6E6E6"></div>
<svg style="position:absolute;left:693px;top:408px" width="14" height="19" shape-rendering="crispEdges"><rect x="6" y="3" width="1" height="1"/><rect x="5" y="4" width="3" height="1"/><rect x="4" y="5" width="5" height="1"/><rect x="4" y="13" width="5" height="1"/><rect x="5" y="14" width="3" height="1"/><rect x="6" y="15" width="1" height="1"/></svg>
<div style="position:absolute;left:714px;top:406px;width:60px;height:23px;box-sizing:border-box;border:1px solid #7A7A7A;background:#fff"></div>
<div style="position:absolute;left:757px;top:406px;width:17px;height:23px;box-sizing:border-box;border:1px solid #B4B4B4;border-left:none;background:#fff"></div>
<div style="position:absolute;left:758px;top:408px;width:14px;height:9px;box-sizing:border-box;border:1px solid #ADADAD;background:#E6E6E6"></div>
<div style="position:absolute;left:758px;top:418px;width:14px;height:9px;box-sizing:border-box;border:1px solid #ADADAD;background:#E6E6E6"></div>
<svg style="position:absolute;left:758px;top:408px" width="14" height="19" shape-rendering="crispEdges"><rect x="6" y="3" width="1" height="1"/><rect x="5" y="4" width="3" height="1"/><rect x="4" y="5" width="5" height="1"/><rect x="4" y="13" width="5" height="1"/><rect x="5" y="14" width="3" height="1"/><rect x="6" y="15" width="1" height="1"/></svg>
<div style="position:absolute;left:72px;top:447px;width:144px;height:36px;box-sizing:border-box;border:1px solid #DCDCDC"></div>
<svg style="position:absolute;left:78px;top:459px" width="13" height="13"><circle cx="6.5" cy="6.5" r="6" fill="#fff" stroke="#333" stroke-width="1.1"/><path d="M4 0h5v1h-5zM0 4h1v1h-1zM0 5h1v1h-1zM0 6h1v1h-1zM0 7h1v1h-1zM0 8h1v1h-1zM12 4h1v1h-1zM12 5h1v1h-1zM12 6h1v1h-1zM12 7h1v1h-1zM12 8h1v1h-1zM4 12h5v1h-5z" fill="#333" shape-rendering="crispEdges"/><circle cx="6.5" cy="6.5" r="3.7" fill="#333" opacity="0"/></svg>
<svg style="position:absolute;left:124px;top:459px" width="13" height="13"><circle cx="6.5" cy="6.5" r="6" fill="#fff" stroke="#333" stroke-width="1.1"/><path d="M4 0h5v1h-5zM0 4h1v1h-1zM0 5h1v1h-1zM0 6h1v1h-1zM0 7h1v1h-1zM0 8h1v1h-1zM12 4h1v1h-1zM12 5h1v1h-1zM12 6h1v1h-1zM12 7h1v1h-1zM12 8h1v1h-1zM4 12h5v1h-5z" fill="#333" shape-rendering="crispEdges"/><circle cx="6.5" cy="6.5" r="3.7" fill="#333" opacity="0"/></svg>
<svg style="position:absolute;left:170px;top:459px" width="13" height="13"><circle cx="6.5" cy="6.5" r="6" fill="#fff" stroke="#333" stroke-width="1.1"/><path d="M4 0h5v1h-5zM0 4h1v1h-1zM0 5h1v1h-1zM0 6h1v1h-1zM0 7h1v1h-1zM0 8h1v1h-1zM12 4h1v1h-1zM12 5h1v1h-1zM12 6h1v1h-1zM12 7h1v1h-1zM12 8h1v1h-1zM4 12h5v1h-5z" fill="#333" shape-rendering="crispEdges"/><circle cx="6.5" cy="6.5" r="3.7" fill="#333" opacity="1"/><path d="M5 3h3v1h-3zM3 5h7v1h-7zM3 6h7v1h-7zM3 7h7v1h-7zM5 9h3v1h-3zM4 4h5v1h-5zM4 8h5v1h-5z" fill="#333"/></svg>
<div style="position:absolute;left:221px;top:447px;width:144px;height:36px;box-sizing:border-box;border:1px solid #DCDCDC"></div>
<svg style="position:absolute;left:227px;top:459px" width="13" height="13"><circle cx="6.5" cy="6.5" r="6" fill="#fff" stroke="#333" stroke-width="1.1"/><path d="M4 0h5v1h-5zM0 4h1v1h-1zM0 5h1v1h-1zM0 6h1v1h-1zM0 7h1v1h-1zM0 8h1v1h-1zM12 4h1v1h-1zM12 5h1v1h-1zM12 6h1v1h-1zM12 7h1v1h-1zM12 8h1v1h-1zM4 12h5v1h-5z" fill="#333" shape-rendering="crispEdges"/><circle cx="6.5" cy="6.5" r="3.7" fill="#333" opacity="0"/></svg>
<svg style="position:absolute;left:273px;top:459px" width="13" height="13"><circle cx="6.5" cy="6.5" r="6" fill="#fff" stroke="#333" stroke-width="1.1"/><path d="M4 0h5v1h-5zM0 4h1v1h-1zM0 5h1v1h-1zM0 6h1v1h-1zM0 7h1v1h-1zM0 8h1v1h-1zM12 4h1v1h-1zM12 5h1v1h-1zM12 6h1v1h-1zM12 7h1v1h-1zM12 8h1v1h-1zM4 12h5v1h-5z" fill="#333" shape-rendering="crispEdges"/><circle cx="6.5" cy="6.5" r="3.7" fill="#333" opacity="0"/></svg>
<svg style="position:absolute;left:319px;top:459px" width="13" height="13"><circle cx="6.5" cy="6.5" r="6" fill="#fff" stroke="#333" stroke-width="1.1"/><path d="M4 0h5v1h-5zM0 4h1v1h-1zM0 5h1v1h-1zM0 6h1v1h-1zM0 7h1v1h-1zM0 8h1v1h-1zM12 4h1v1h-1zM12 5h1v1h-1zM12 6h1v1h-1zM12 7h1v1h-1zM12 8h1v1h-1zM4 12h5v1h-5z" fill="#333" shape-rendering="crispEdges"/><circle cx="6.5" cy="6.5" r="3.7" fill="#333" opacity="1"/><path d="M5 3h3v1h-3zM3 5h7v1h-7zM3 6h7v1h-7zM3 7h7v1h-7zM5 9h3v1h-3zM4 4h5v1h-5zM4 8h5v1h-5z" fill="#333"/></svg>
<div style="position:absolute;left:370px;top:447px;width:144px;height:36px;box-sizing:border-box;border:1px solid #DCDCDC"></div>
<svg style="position:absolute;left:376px;top:459px" width="13" height="13"><circle cx="6.5" cy="6.5" r="6" fill="#fff" stroke="#333" stroke-width="1.1"/><path d="M4 0h5v1h-5zM0 4h1v1h-1zM0 5h1v1h-1zM0 6h1v1h-1zM0 7h1v1h-1zM0 8h1v1h-1zM12 4h1v1h-1zM12 5h1v1h-1zM12 6h1v1h-1zM12 7h1v1h-1zM12 8h1v1h-1zM4 12h5v1h-5z" fill="#333" shape-rendering="crispEdges"/><circle cx="6.5" cy="6.5" r="3.7" fill="#333" opacity="0"/></svg>
<svg style="position:absolute;left:422px;top:459px" width="13" height="13"><circle cx="6.5" cy="6.5" r="6" fill="#fff" stroke="#333" stroke-width="1.1"/><path d="M4 0h5v1h-5zM0 4h1v1h-1zM0 5h1v1h-1zM0 6h1v1h-1zM0 7h1v1h-1zM0 8h1v1h-1zM12 4h1v1h-1zM12 5h1v1h-1zM12 6h1v1h-1zM12 7h1v1h-1zM12 8h1v1h-1zM4 12h5v1h-5z" fill="#333" shape-rendering="crispEdges"/><circle cx="6.5" cy="6.5" r="3.7" fill="#333" opacity="0"/></svg>
<svg style="position:absolute;left:468px;top:459px" width="13" height="13"><circle cx="6.5" cy="6.5" r="6" fill="#fff" stroke="#333" stroke-width="1.1"/><path d="M4 0h5v1h-5zM0 4h1v1h-1zM0 5h1v1h-1zM0 6h1v1h-1zM0 7h1v1h-1zM0 8h1v1h-1zM12 4h1v1h-1zM12 5h1v1h-1zM12 6h1v1h-1zM12 7h1v1h-1zM12 8h1v1h-1zM4 12h5v1h-5z" fill="#333" shape-rendering="crispEdges"/><circle cx="6.5" cy="6.5" r="3.7" fill="#333" opacity="1"/><path d="M5 3h3v1h-3zM3 5h7v1h-7zM3 6h7v1h-7zM3 7h7v1h-7zM5 9h3v1h-3zM4 4h5v1h-5zM4 8h5v1h-5z" fill="#333"/></svg>
<div style="position:absolute;left:519px;top:450px;width:60px;height:23px;box-sizing:border-box;border:1px solid #7A7A7A;background:#fff"></div>
<div style="position:absolute;left:562px;top:450px;width:17px;height:23px;box-sizing:border-box;border:1px solid #B4B4B4;border-left:none;background:#fff"></div>
<div style="position:absolute;left:563px;top:452px;width:14px;height:9px;box-sizing:border-box;border:1px solid #ADADAD;background:#E6E6E6"></div>
<div style="position:absolute;left:563px;top:462px;width:14px;height:9px;box-sizing:border-box;border:1px solid #ADADAD;background:#E6E6E6"></div>
<svg style="position:absolute;left:563px;top:452px" width="14" height="19" shape-rendering="crispEdges"><rect x="6" y="3" width="1" height="1"/><rect x="5" y="4" width="3" height="1"/><rect x="4" y="5" width="5" height="1"/><rect x="4" y="13" width="5" height="1"/><rect x="5" y="14" width="3" height="1"/><rect x="6" y="15" width="1" height="1"/></svg>
<div style="position:absolute;left:584px;top:450px;width:60px;height:23px;box-sizing:border-box;border:1px solid #7A7A7A;background:#fff"></div>
<div style="position:absolute;left:627px;top:450px;width:17px;height:23px;box-sizing:border-box;border:1px solid #B4B4B4;border-left:none;background:#fff"></div>
<div style="position:absolute;left:628px;top:452px;width:14px;height:9px;box-sizing:border-box;border:1px solid #ADADAD;background:#E6E6E6"></div>
<div style="position:absolute;left:628px;top:462px;width:14px;height:9px;box-sizing:border-box;border:1px solid #ADADAD;background:#E6E6E6"></div>
<svg style="position:absolute;left:628px;top:452px" width="14" height="19" shape-rendering="crispEdges"><rect x="6" y="3" width="1" height="1"/><rect x="5" y="4" width="3" height="1"/><rect x="4" y="5" width="5" height="1"/><rect x="4" y="13" width="5" height="1"/><rect x="5" y="14" width="3" height="1"/><rect x="6" y="15" width="1" height="1"/></svg>
<div style="position:absolute;left:649px;top:450px;width:60px;height:23px;box-sizing:border-box;border:1px solid #7A7A7A;background:#fff"></div>
<div style="position:absolute;left:692px;top:450px;width:17px;height:23px;box-sizing:border-box;border:1px solid #B4B4B4;border-left:none;background:#fff"></div>
<div style="position:absolute;left:693px;top:452px;width:14px;height:9px;box-sizing:border-box;border:1px solid #ADADAD;background:#E6E6E6"></div>
<div style="position:absolute;left:693px;top:462px;width:14px;height:9px;box-sizing:border-box;border:1px solid #ADADAD;background:#E6E6E6"></div>
<svg style="position:absolute;left:693px;top:452px" width="14" height="19" shape-rendering="crispEdges"><rect x="6" y="3" width="1" height="1"/><rect x="5" y="4" width="3" height="1"/><rect x="4" y="5" width="5" height="1"/><rect x="4" y="13" width="5" height="1"/><rect x="5" y="14" width="3" height="1"/><rect x="6" y="15" width="1" height="1"/></svg>
<div style="position:absolute;left:714px;top:450px;width:60px;height:23px;box-sizing:border-box;border:1px solid #7A7A7A;background:#fff"></div>
<div style="position:absolute;left:757px;top:450px;width:17px;height:23px;box-sizing:border-box;border:1px solid #B4B4B4;border-left:none;background:#fff"></div>
<div style="position:absolute;left:758px;top:452px;width:14px;height:9px;box-sizing:border-box;border:1px solid #ADADAD;background:#E6E6E6"></div>
<div style="position:absolute;left:758px;top:462px;width:14px;height:9px;box-sizing:border-box;border:1px solid #ADADAD;background:#E6E6E6"></div>
<svg style="position:absolute;left:758px;top:452px" width="14" height="19" shape-rendering="crispEdges"><rect x="6" y="3" width="1" height="1"/><rect x="5" y="4" width="3" height="1"/><rect x="4" y="5" width="5" height="1"/><rect x="4" y="13" width="5" height="1"/><rect x="5" y="14" width="3" height="1"/><rect x="6" y="15" width="1" height="1"/></svg>
<div style="position:absolute;left:101px;top:494px;width:687px;height:23px;box-sizing:border-box;border:1px solid #7A7A7A;background:#fff"></div>
<div style="position:absolute;left:7px;top:547px;width:73px;height:21px;box-sizing:border-box;border:1px solid #ADADAD;background:#E1E1E1"></div>
<div style="position:absolute;left:92px;top:547px;width:73px;height:21px;box-sizing:border-box;border:1px solid #ADADAD;background:#E1E1E1"></div>
<div style="position:absolute;left:177px;top:547px;width:73px;height:21px;box-sizing:border-box;border:1px solid #ADADAD;background:#E1E1E1"></div>
<div style="position:absolute;left:262px;top:547px;width:48px;height:21px;box-sizing:border-box;border:1px solid #ADADAD;background:#E1E1E1"></div>
<div style="position:absolute;left:322px;top:547px;width:48px;height:21px;box-sizing:border-box;border:1px solid #ADADAD;background:#E1E1E1"></div>
<div style="position:absolute;left:472px;top:547px;width:73px;height:21px;box-sizing:border-box;border:2px solid #0078D7;background:#E1E1E1"></div>
<div style="position:absolute;left:555px;top:547px;width:73px;height:21px;box-sizing:border-box;border:1px solid #ADADAD;background:#E1E1E1"></div>
<div style="position:absolute;left:638px;top:547px;width:73px;height:21px;box-sizing:border-box;border:1px solid #ADADAD;background:#E1E1E1"></div>
<div style="position:absolute;left:721px;top:547px;width:73px;height:21px;box-sizing:border-box;border:1px solid #ADADAD;background:#E1E1E1"></div>
<div style="position:absolute;left:799px;top:564px;width:2px;height:2px;background:#B8B8B8"></div>
<div style="position:absolute;left:796px;top:567px;width:2px;height:2px;background:#B8B8B8"></div>
<div style="position:absolute;left:799px;top:567px;width:2px;height:2px;background:#B8B8B8"></div>
<div style="position:absolute;left:793px;top:570px;width:2px;height:2px;background:#B8B8B8"></div>
<div style="position:absolute;left:796px;top:570px;width:2px;height:2px;background:#B8B8B8"></div>
<div style="position:absolute;left:799px;top:570px;width:2px;height:2px;background:#B8B8B8"></div>
<div style="position:absolute;left:8.04px;top:9px;color:#fff;transform:scaleX(0.9639);transform-origin:0 0;">Signal sg2 (2/3)</div>
<div style="position:absolute;left:13.84px;top:42px;color:#000;transform:scaleX(0.9643);transform-origin:0 0;">Index</div>
<div style="position:absolute;left:62.00px;top:42px;color:#000;transform:scaleX(0.9429);transform-origin:0 0;">General</div>
<div style="position:absolute;left:113.51px;top:42px;color:#000;transform:scaleX(0.9870);transform-origin:0 0;">Interface</div>
<div style="position:absolute;left:172.30px;top:42px;color:#000;transform:scaleX(1.0088);transform-origin:0 0;">Wiring</div>
<div style="position:absolute;left:267.05px;top:42px;color:#000;transform:scaleX(0.9471);transform-origin:0 0;">Usage</div>
<div style="position:absolute;left:219.54px;top:40px;color:#000;transform:scaleX(0.9639);transform-origin:0 0;">Details</div>
<div style="position:absolute;left:25.21px;top:68px;color:#000;transform:scaleX(0.9948);transform-origin:0 0;">Signal type</div>
<div style="position:absolute;left:39.03px;top:92px;color:#000;transform:scaleX(0.9747);transform-origin:0 0;">Semaphore signal</div>
<div style="position:absolute;left:38.58px;top:114px;color:#000;transform:scaleX(1.0169);transform-origin:0 0;">Light signal</div>
<div style="position:absolute;left:389.37px;top:68px;color:#000;transform:scaleX(1.0286);transform-origin:0 0;">Signification</div>
<div style="position:absolute;left:403.02px;top:92px;color:#000;transform:scaleX(0.9775);transform-origin:0 0;">Distant signal</div>
<div style="position:absolute;left:402.80px;top:114px;color:#000;">Shunting signal</div>
<div style="position:absolute;left:506.98px;top:92px;color:#000;transform:scaleX(1.0169);transform-origin:0 0;">Main signal</div>
<div style="position:absolute;left:506.84px;top:114px;color:#000;transform:scaleX(0.9621);transform-origin:0 0;">Block state</div>
<div style="position:absolute;left:17.10px;top:153px;color:#000;transform:scaleX(0.9535);transform-origin:0 0;">Aspects</div>
<div style="position:absolute;left:74.00px;top:153px;color:#000;">2</div>
<div style="position:absolute;left:28.07px;top:181px;color:#000;transform:scaleX(0.9333);transform-origin:0 0;">Prefix</div>
<div style="position:absolute;left:396.62px;top:155px;color:#000;transform:scaleX(0.9800);transform-origin:0 0;">Dwarf signal</div>
<div style="position:absolute;left:397.06px;top:175px;color:#000;transform:scaleX(0.9434);transform-origin:0 0;">Use prefix</div>
<div style="position:absolute;left:380.74px;top:218px;color:#000;transform:scaleX(0.9614);transform-origin:0 0;">Patterns</div>
<div style="position:absolute;left:28.50px;top:244px;color:#000;transform:scaleX(0.9692);transform-origin:0 0;">Aspect:</div>
<div style="position:absolute;left:108.79px;top:244px;color:#000;transform:scaleX(0.9122);transform-origin:0 0;">RED Address:</div>
<div style="position:absolute;left:251.30px;top:244px;color:#000;transform:scaleX(0.9054);transform-origin:0 0;">GREEN Address:</div>
<div style="position:absolute;left:395.70px;top:244px;color:#000;transform:scaleX(0.9222);transform-origin:0 0;">YELLOW Address:</div>
<div style="position:absolute;left:518.75px;top:244px;color:#000;transform:scaleX(1.0455);transform-origin:0 0;">Number:</div>
<div style="position:absolute;left:579.50px;top:244px;color:#000;transform:scaleX(0.9313);transform-origin:0 0;">Value:</div>
<div style="position:absolute;left:643.75px;top:244px;color:#000;transform:scaleX(1.0500);transform-origin:0 0;">Number:</div>
<div style="position:absolute;left:709.20px;top:244px;color:#000;transform:scaleX(0.9500);transform-origin:0 0;">Value:</div>
<div style="position:absolute;left:45.87px;top:279px;color:#000;transform:scaleX(0.8333);transform-origin:0 0;">RED</div>
<div style="position:absolute;left:93.80px;top:283px;color:#000;transform:scaleX(0.8000);transform-origin:0 0;"><u style="text-decoration-thickness:1px;text-underline-offset:1px">R</u>1</div>
<div style="position:absolute;left:140.60px;top:283px;color:#000;transform:scaleX(0.7438);transform-origin:0 0;"><u style="text-decoration-thickness:1px;text-underline-offset:1px">G</u>1</div>
<div style="position:absolute;left:185.59px;top:283px;color:#000;transform:scaleX(1.1143);transform-origin:0 0;"><u style="text-decoration-thickness:1px;text-underline-offset:1px">N</u></div>
<div style="position:absolute;left:242.80px;top:283px;color:#000;transform:scaleX(0.8000);transform-origin:0 0;"><u style="text-decoration-thickness:1px;text-underline-offset:1px">R</u>2</div>
<div style="position:absolute;left:289.60px;top:283px;color:#000;transform:scaleX(0.7438);transform-origin:0 0;"><u style="text-decoration-thickness:1px;text-underline-offset:1px">G</u>2</div>
<div style="position:absolute;left:334.59px;top:283px;color:#000;transform:scaleX(1.1143);transform-origin:0 0;"><u style="text-decoration-thickness:1px;text-underline-offset:1px">N</u></div>
<div style="position:absolute;left:391.80px;top:283px;color:#000;transform:scaleX(0.8000);transform-origin:0 0;"><u style="text-decoration-thickness:1px;text-underline-offset:1px">R</u>3</div>
<div style="position:absolute;left:438.60px;top:283px;color:#000;transform:scaleX(0.7438);transform-origin:0 0;"><u style="text-decoration-thickness:1px;text-underline-offset:1px">G</u>3</div>
<div style="position:absolute;left:483.59px;top:283px;color:#000;transform:scaleX(1.1143);transform-origin:0 0;"><u style="text-decoration-thickness:1px;text-underline-offset:1px">N</u></div>
<div style="position:absolute;left:525.00px;top:278px;color:#000;">0</div>
<div style="position:absolute;left:590.00px;top:278px;color:#000;">0</div>
<div style="position:absolute;left:655.00px;top:278px;color:#000;">0</div>
<div style="position:absolute;left:720.00px;top:278px;color:#000;">0</div>
<div style="position:absolute;left:31.40px;top:323px;color:#000;transform:scaleX(0.8405);transform-origin:0 0;">GREEN</div>
<div style="position:absolute;left:93.80px;top:327px;color:#000;transform:scaleX(0.8000);transform-origin:0 0;"><u style="text-decoration-thickness:1px;text-underline-offset:1px">R</u>1</div>
<div style="position:absolute;left:140.60px;top:327px;color:#000;transform:scaleX(0.7438);transform-origin:0 0;"><u style="text-decoration-thickness:1px;text-underline-offset:1px">G</u>1</div>
<div style="position:absolute;left:185.59px;top:327px;color:#000;transform:scaleX(1.1143);transform-origin:0 0;"><u style="text-decoration-thickness:1px;text-underline-offset:1px">N</u></div>
<div style="position:absolute;left:242.80px;top:327px;color:#000;transform:scaleX(0.8000);transform-origin:0 0;"><u style="text-decoration-thickness:1px;text-underline-offset:1px">R</u>2</div>
<div style="position:absolute;left:289.60px;top:327px;color:#000;transform:scaleX(0.7438);transform-origin:0 0;"><u style="text-decoration-thickness:1px;text-underline-offset:1px">G</u>2</div>
<div style="position:absolute;left:334.59px;top:327px;color:#000;transform:scaleX(1.1143);transform-origin:0 0;"><u style="text-decoration-thickness:1px;text-underline-offset:1px">N</u></div>
<div style="position:absolute;left:391.80px;top:327px;color:#000;transform:scaleX(0.8000);transform-origin:0 0;"><u style="text-decoration-thickness:1px;text-underline-offset:1px">R</u>3</div>
<div style="position:absolute;left:438.60px;top:327px;color:#000;transform:scaleX(0.7438);transform-origin:0 0;"><u style="text-decoration-thickness:1px;text-underline-offset:1px">G</u>3</div>
<div style="position:absolute;left:483.59px;top:327px;color:#000;transform:scaleX(1.1143);transform-origin:0 0;"><u style="text-decoration-thickness:1px;text-underline-offset:1px">N</u></div>
<div style="position:absolute;left:525.00px;top:322px;color:#000;">0</div>
<div style="position:absolute;left:590.00px;top:322px;color:#000;">0</div>
<div style="position:absolute;left:655.00px;top:322px;color:#000;">0</div>
<div style="position:absolute;left:720.00px;top:322px;color:#000;">0</div>
<div style="position:absolute;left:22.50px;top:367px;color:#000;transform:scaleX(0.8840);transform-origin:0 0;">YELLOW</div>
<div style="position:absolute;left:93.80px;top:371px;color:#000;transform:scaleX(0.8000);transform-origin:0 0;"><u style="text-decoration-thickness:1px;text-underline-offset:1px">R</u>1</div>
<div style="position:absolute;left:140.60px;top:371px;color:#000;transform:scaleX(0.7438);transform-origin:0 0;"><u style="text-decoration-thickness:1px;text-underline-offset:1px">G</u>1</div>
<div style="position:absolute;left:185.59px;top:371px;color:#000;transform:scaleX(1.1143);transform-origin:0 0;"><u style="text-decoration-thickness:1px;text-underline-offset:1px">N</u></div>
<div style="position:absolute;left:242.80px;top:371px;color:#000;transform:scaleX(0.8000);transform-origin:0 0;"><u style="text-decoration-thickness:1px;text-underline-offset:1px">R</u>2</div>
<div style="position:absolute;left:289.60px;top:371px;color:#000;transform:scaleX(0.7438);transform-origin:0 0;"><u style="text-decoration-thickness:1px;text-underline-offset:1px">G</u>2</div>
<div style="position:absolute;left:334.59px;top:371px;color:#000;transform:scaleX(1.1143);transform-origin:0 0;"><u style="text-decoration-thickness:1px;text-underline-offset:1px">N</u></div>
<div style="position:absolute;left:391.80px;top:371px;color:#000;transform:scaleX(0.8000);transform-origin:0 0;"><u style="text-decoration-thickness:1px;text-underline-offset:1px">R</u>3</div>
<div style="position:absolute;left:438.60px;top:371px;color:#000;transform:scaleX(0.7438);transform-origin:0 0;"><u style="text-decoration-thickness:1px;text-underline-offset:1px">G</u>3</div>
<div style="position:absolute;left:483.59px;top:371px;color:#000;transform:scaleX(1.1143);transform-origin:0 0;"><u style="text-decoration-thickness:1px;text-underline-offset:1px">N</u></div>
<div style="position:absolute;left:525.00px;top:366px;color:#000;">0</div>
<div style="position:absolute;left:590.00px;top:366px;color:#000;">0</div>
<div style="position:absolute;left:655.00px;top:366px;color:#000;">0</div>
<div style="position:absolute;left:720.00px;top:366px;color:#000;">0</div>
<div style="position:absolute;left:32.70px;top:411px;color:#000;transform:scaleX(0.8718);transform-origin:0 0;">WHITE</div>
<div style="position:absolute;left:93.80px;top:415px;color:#000;transform:scaleX(0.8000);transform-origin:0 0;"><u style="text-decoration-thickness:1px;text-underline-offset:1px">R</u>1</div>
<div style="position:absolute;left:140.60px;top:415px;color:#000;transform:scaleX(0.7438);transform-origin:0 0;"><u style="text-decoration-thickness:1px;text-underline-offset:1px">G</u>1</div>
<div style="position:absolute;left:185.59px;top:415px;color:#000;transform:scaleX(1.1143);transform-origin:0 0;"><u style="text-decoration-thickness:1px;text-underline-offset:1px">N</u></div>
<div style="position:absolute;left:242.80px;top:415px;color:#000;transform:scaleX(0.8000);transform-origin:0 0;"><u style="text-decoration-thickness:1px;text-underline-offset:1px">R</u>2</div>
<div style="position:absolute;left:289.60px;top:415px;color:#000;transform:scaleX(0.7438);transform-origin:0 0;"><u style="text-decoration-thickness:1px;text-underline-offset:1px">G</u>2</div>
<div style="position:absolute;left:334.59px;top:415px;color:#000;transform:scaleX(1.1143);transform-origin:0 0;"><u style="text-decoration-thickness:1px;text-underline-offset:1px">N</u></div>
<div style="position:absolute;left:391.80px;top:415px;color:#000;transform:scaleX(0.8000);transform-origin:0 0;"><u style="text-decoration-thickness:1px;text-underline-offset:1px">R</u>3</div>
<div style="position:absolute;left:438.60px;top:415px;color:#000;transform:scaleX(0.7438);transform-origin:0 0;"><u style="text-decoration-thickness:1px;text-underline-offset:1px">G</u>3</div>
<div style="position:absolute;left:483.59px;top:415px;color:#000;transform:scaleX(1.1143);transform-origin:0 0;"><u style="text-decoration-thickness:1px;text-underline-offset:1px">N</u></div>
<div style="position:absolute;left:525.00px;top:410px;color:#000;">0</div>
<div style="position:absolute;left:590.00px;top:410px;color:#000;">0</div>
<div style="position:absolute;left:655.00px;top:410px;color:#000;">0</div>
<div style="position:absolute;left:720.00px;top:410px;color:#000;">0</div>
<div style="position:absolute;left:29.75px;top:455px;color:#000;transform:scaleX(0.9474);transform-origin:0 0;">BLANK</div>
<div style="position:absolute;left:93.80px;top:459px;color:#000;transform:scaleX(0.8000);transform-origin:0 0;"><u style="text-decoration-thickness:1px;text-underline-offset:1px">R</u>1</div>
<div style="position:absolute;left:140.60px;top:459px;color:#000;transform:scaleX(0.7438);transform-origin:0 0;"><u style="text-decoration-thickness:1px;text-underline-offset:1px">G</u>1</div>
<div style="position:absolute;left:185.59px;top:459px;color:#000;transform:scaleX(1.1143);transform-origin:0 0;"><u style="text-decoration-thickness:1px;text-underline-offset:1px">N</u></div>
<div style="position:absolute;left:242.80px;top:459px;color:#000;transform:scaleX(0.8000);transform-origin:0 0;"><u style="text-decoration-thickness:1px;text-underline-offset:1px">R</u>2</div>
<div style="position:absolute;left:289.60px;top:459px;color:#000;transform:scaleX(0.7438);transform-origin:0 0;"><u style="text-decoration-thickness:1px;text-underline-offset:1px">G</u>2</div>
<div style="position:absolute;left:334.59px;top:459px;color:#000;transform:scaleX(1.1143);transform-origin:0 0;"><u style="text-decoration-thickness:1px;text-underline-offset:1px">N</u></div>
<div style="position:absolute;left:391.80px;top:459px;color:#000;transform:scaleX(0.8000);transform-origin:0 0;"><u style="text-decoration-thickness:1px;text-underline-offset:1px">R</u>3</div>
<div style="position:absolute;left:438.60px;top:459px;color:#000;transform:scaleX(0.7438);transform-origin:0 0;"><u style="text-decoration-thickness:1px;text-underline-offset:1px">G</u>3</div>
<div style="position:absolute;left:483.59px;top:459px;color:#000;transform:scaleX(1.1143);transform-origin:0 0;"><u style="text-decoration-thickness:1px;text-underline-offset:1px">N</u></div>
<div style="position:absolute;left:525.00px;top:454px;color:#000;">0</div>
<div style="position:absolute;left:590.00px;top:454px;color:#000;">0</div>
<div style="position:absolute;left:655.00px;top:454px;color:#000;">0</div>
<div style="position:absolute;left:720.00px;top:454px;color:#000;">0</div>
<div style="position:absolute;left:17.40px;top:498px;color:#000;transform:scaleX(0.9632);transform-origin:0 0;">Aspect names</div>
<div style="position:absolute;left:40.00px;top:551px;color:#000;">&lt;</div>
<div style="position:absolute;left:125.00px;top:551px;color:#000;">&gt;</div>
<div style="position:absolute;left:204.35px;top:551px;color:#000;transform:scaleX(1.0765);transform-origin:0 0;">&lt;/&gt;</div>
<div style="position:absolute;left:282.50px;top:551px;color:#000;">+</div>
<div style="position:absolute;left:334.40px;top:551px;color:#000;transform:scaleX(0.9667);transform-origin:0 0;">ABC</div>
<div style="position:absolute;left:500.80px;top:551px;color:#000;transform:scaleX(0.9059);transform-origin:0 0;">OK</div>
<div style="position:absolute;left:573.90px;top:551px;color:#000;transform:scaleX(0.9514);transform-origin:0 0;">Cancel</div>
<div style="position:absolute;left:659.20px;top:551px;color:#000;transform:scaleX(1.0200);transform-origin:0 0;">Apply</div>
<div style="position:absolute;left:744.39px;top:551px;color:#000;transform:scaleX(1.0083);transform-origin:0 0;">Help</div>
</body></html>
